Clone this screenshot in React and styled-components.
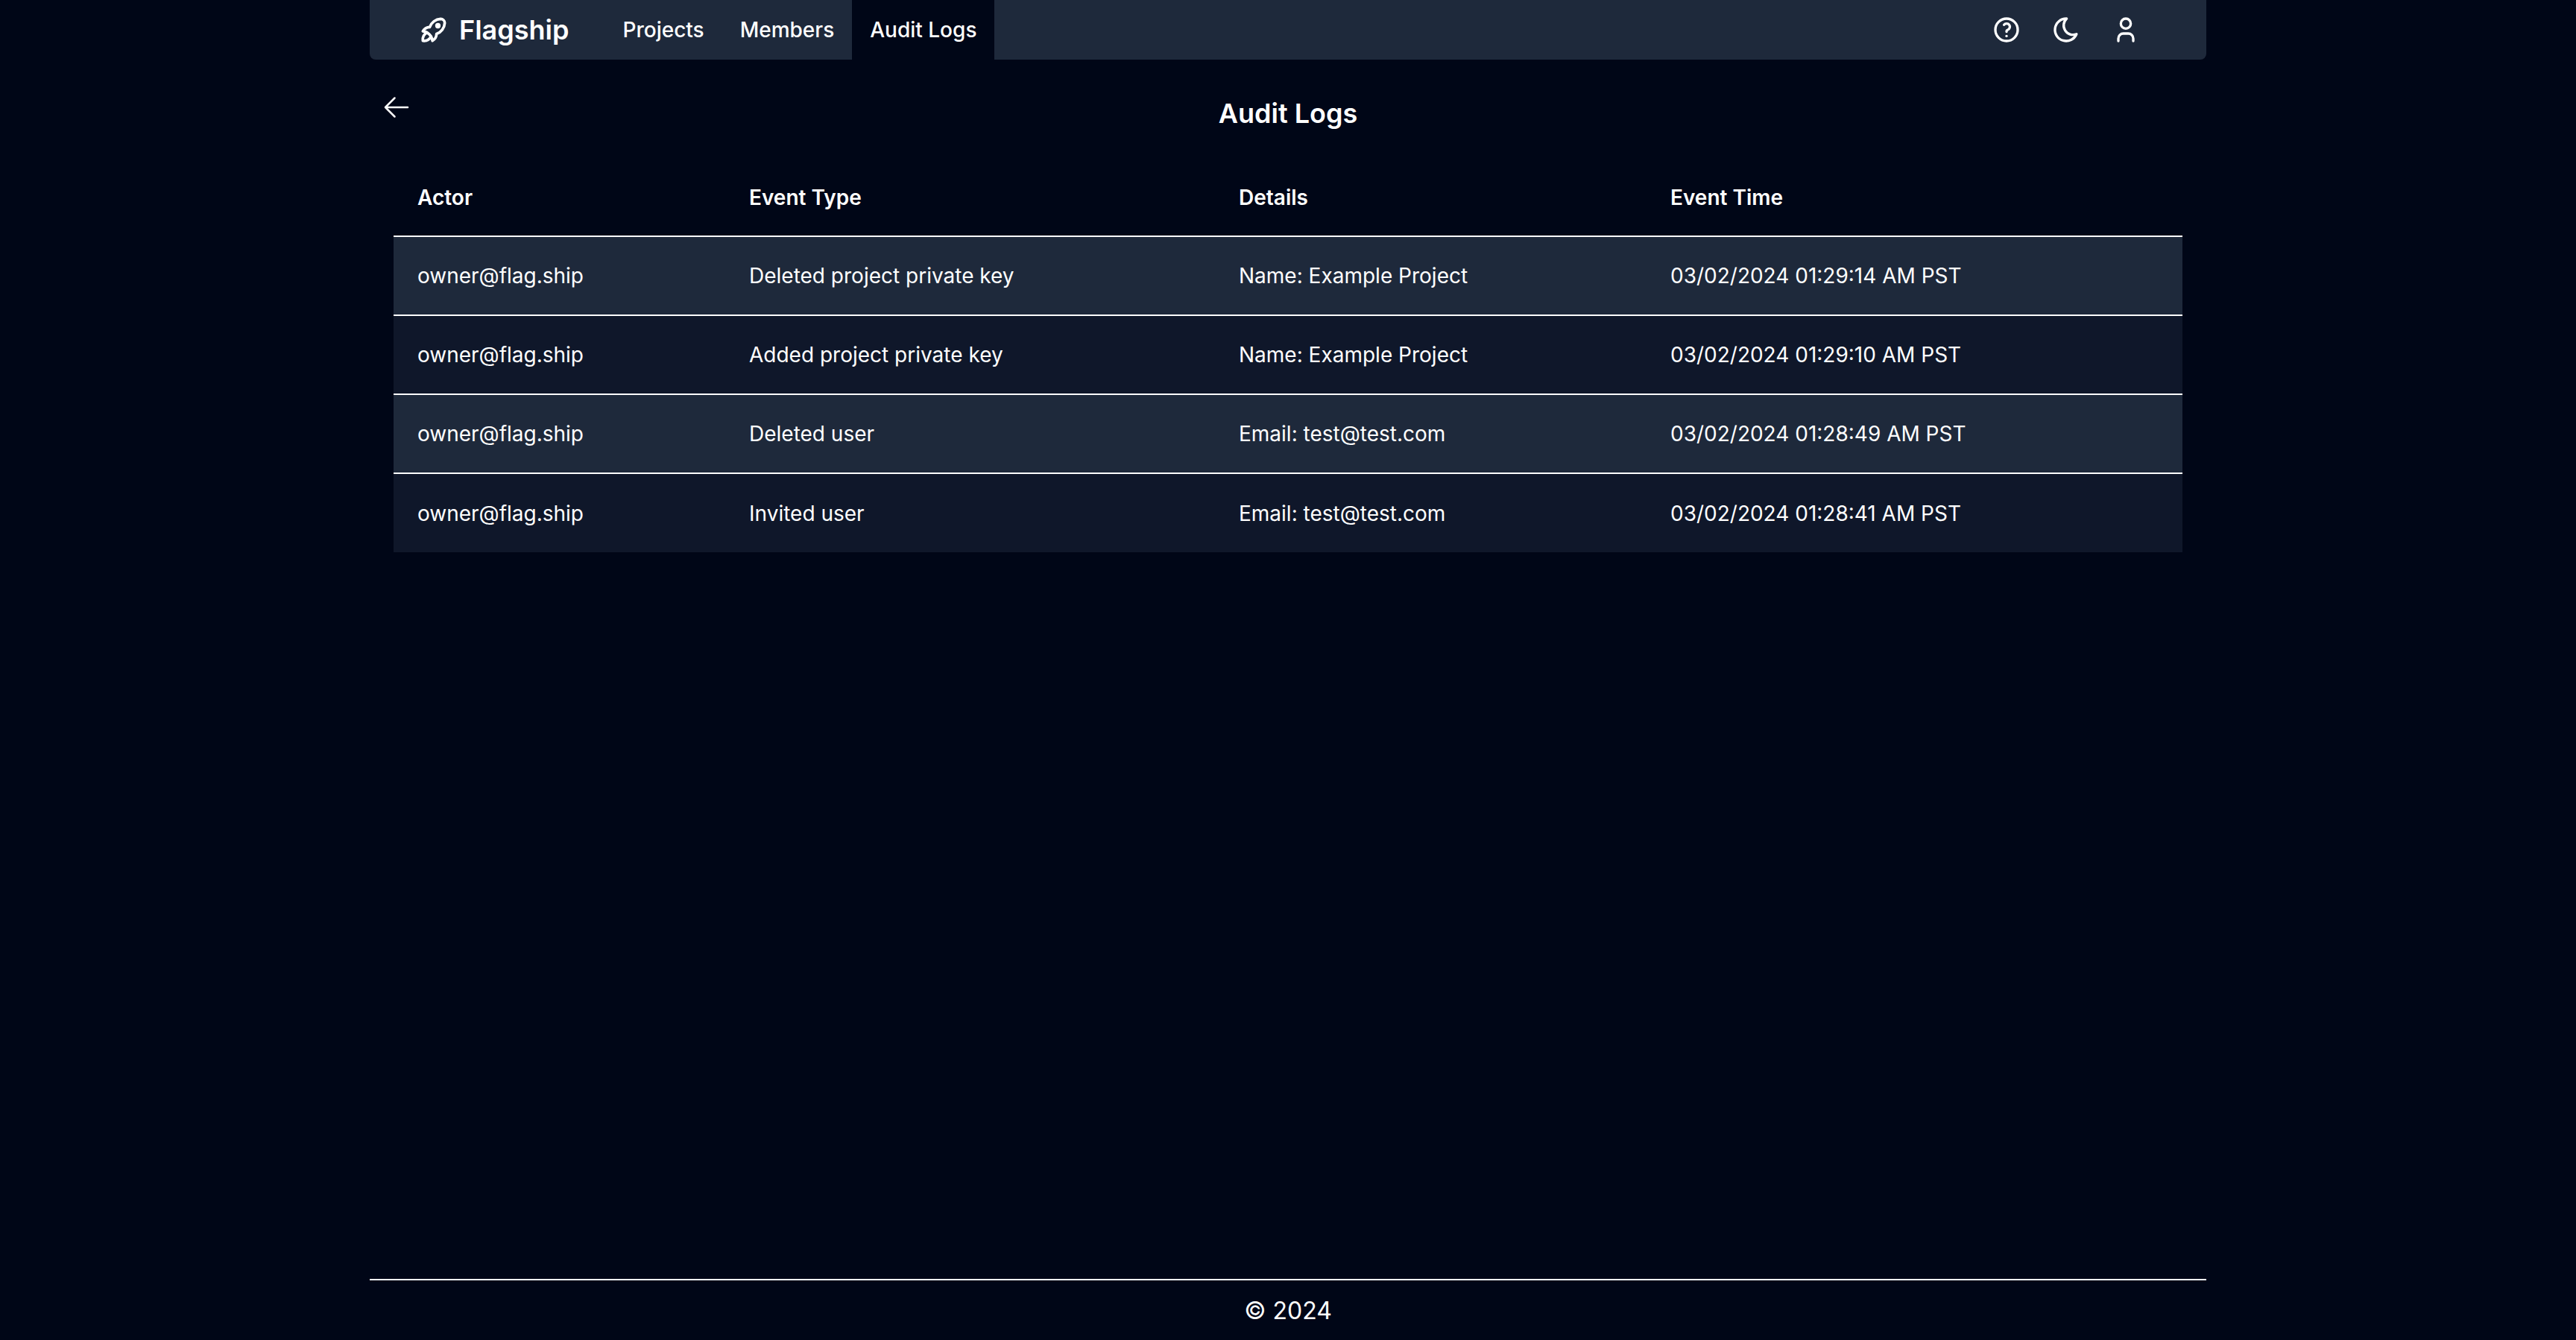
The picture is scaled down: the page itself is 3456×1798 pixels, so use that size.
import styled, { createGlobalStyle } from 'styled-components';
import { TbRocket, TbHelp, TbMoon, TbUser } from 'react-icons/tb';
import { HiOutlineArrowLeft } from 'react-icons/hi2';

const logs = [
    { actor: 'owner@flag.ship', type: 'Deleted project private key', details: 'Name: Example Project', time: '03/02/2024 01:29:14 AM PST' },
    { actor: 'owner@flag.ship', type: 'Added project private key', details: 'Name: Example Project', time: '03/02/2024 01:29:10 AM PST' },
    { actor: 'owner@flag.ship', type: 'Deleted user', details: 'Email: test@test.com', time: '03/02/2024 01:28:49 AM PST' },
    { actor: 'owner@flag.ship', type: 'Invited user', details: 'Email: test@test.com', time: '03/02/2024 01:28:41 AM PST' },
];

const GlobalStyle = createGlobalStyle`
    html, body {
        margin: 0;
        padding: 0;
        background: #000617;
    }
    body {
        font-family: Inter, "Liberation Sans", sans-serif;
        color: #ffffff;
    }
`;

const Page = styled.div`
    width: 2464px;
    height: 1798px;
    margin: 0 auto;
    display: flex;
    flex-direction: column;
`;

const Nav = styled.nav`
    height: 80px;
    flex-shrink: 0;
    display: flex;
    align-items: stretch;
    justify-content: space-between;
    padding: 0 88px 0 64px;
    background: #1e293b;
    border-radius: 0 0 8px 8px;
`;

const NavLeft = styled.div`
    display: flex;
    align-items: stretch;
`;

const Brand = styled.div`
    display: flex;
    align-items: center;
    gap: 12px;
    margin-right: 48px;
    font-size: 36px;
    font-weight: 600;
`;

const NavLink = styled.a`
    display: flex;
    align-items: center;
    padding: 0 24px;
    font-size: 28px;
    font-weight: 500;
    color: #ffffff;
    background: ${props => (props.$active ? '#000617' : 'transparent')};
`;

const NavIcons = styled.div`
    display: flex;
    align-items: center;
    gap: 40px;
    font-size: 40px;
`;

const Main = styled.main`
    flex: 1;
    display: flex;
    flex-direction: column;
`;

const TitleRow = styled.div`
    position: relative;
    display: flex;
    justify-content: center;
    padding-top: 50px;
`;

const BackIcon = styled(HiOutlineArrowLeft)`
    position: absolute;
    left: 16px;
    top: 44px;
    font-size: 40px;
`;

const Title = styled.h1`
    margin: 0;
    font-size: 36px;
    line-height: 44px;
    font-weight: 600;
`;

const Table = styled.table`
    width: 2400px;
    margin: 40px 32px 0;
    border-collapse: collapse;
    table-layout: fixed;
    font-size: 28px;
`;

const Th = styled.th`
    height: 102px;
    padding: 0 32px;
    text-align: left;
    font-weight: 600;
`;

const Tr = styled.tr`
    height: 106px;
    border-top: 2px solid #ffffff;
    background: ${props => (props.$odd ? '#1e293b' : '#0f172a')};
`;

const Td = styled.td`
    padding: 0 32px;
`;

const Footer = styled.footer`
    height: 80px;
    display: flex;
    align-items: center;
    justify-content: center;
    border-top: 2px solid #ffffff;
    font-size: 32px;
`;

const App = () => (
    <>
        <GlobalStyle />
        <Page>
            <Nav>
                <NavLeft>
                    <Brand>
                        <TbRocket size={44} />
                        Flagship
                    </Brand>
                    <NavLink>Projects</NavLink>
                    <NavLink>Members</NavLink>
                    <NavLink $active>Audit Logs</NavLink>
                </NavLeft>
                <NavIcons>
                    <TbHelp />
                    <TbMoon />
                    <TbUser />
                </NavIcons>
            </Nav>
            <Main>
                <TitleRow>
                    <BackIcon />
                    <Title>Audit Logs</Title>
                </TitleRow>
                <Table>
                    <colgroup>
                        <col width="445" />
                        <col width="657" />
                        <col width="579" />
                        <col width="719" />
                    </colgroup>
                    <thead>
                        <tr>
                            <Th>Actor</Th>
                            <Th>Event Type</Th>
                            <Th>Details</Th>
                            <Th>Event Time</Th>
                        </tr>
                    </thead>
                    <tbody>
                        {logs.map((log, i) => (
                            <Tr key={log.time} $odd={i % 2 === 0}>
                                <Td>{log.actor}</Td>
                                <Td>{log.type}</Td>
                                <Td>{log.details}</Td>
                                <Td>{log.time}</Td>
                            </Tr>
                        ))}
                    </tbody>
                </Table>
            </Main>
            <Footer>© 2024</Footer>
        </Page>
    </>
);

export default App;
